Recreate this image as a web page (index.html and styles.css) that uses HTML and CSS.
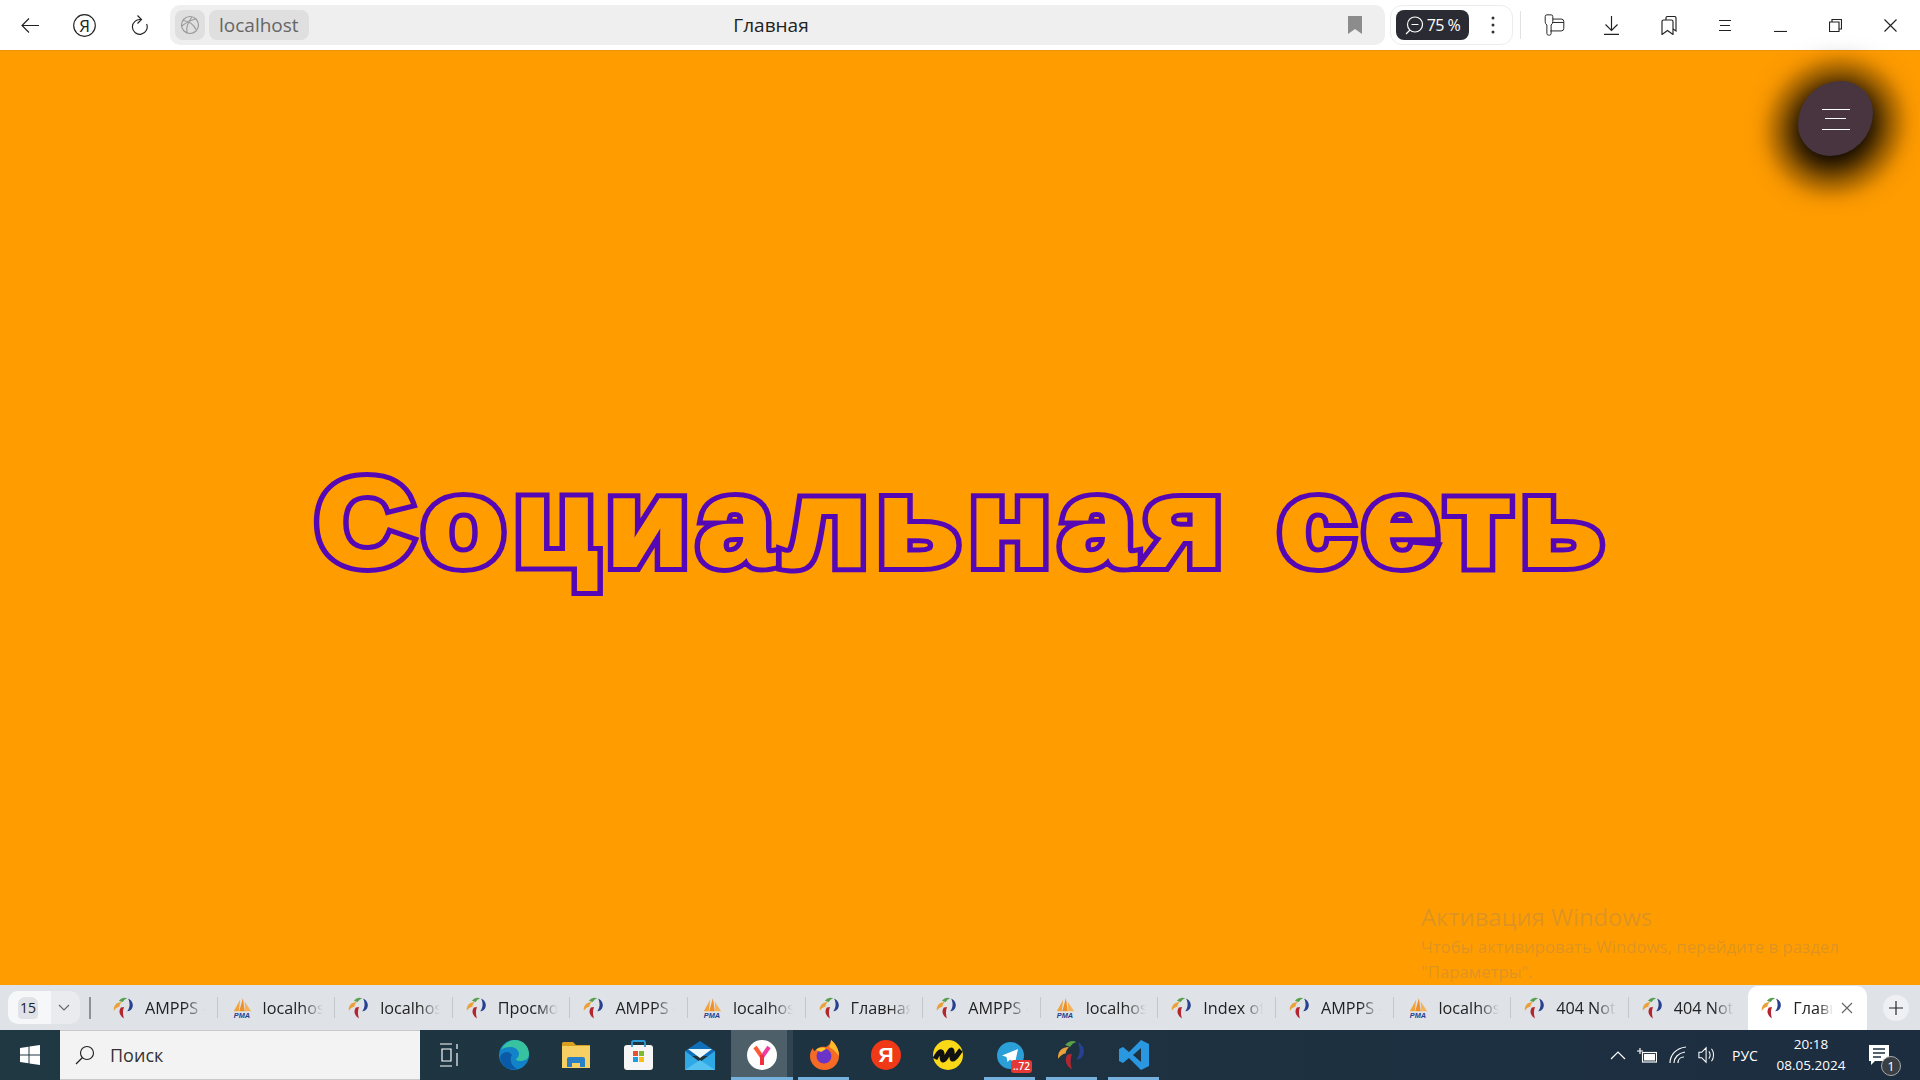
FILE: index.html
```html
<!DOCTYPE html>
<html lang="ru">
<head>
  <meta charset="UTF-8" />
  <meta name="viewport" content="width=device-width, initial-scale=1.0"/>
  <title>Главная</title>
  <link rel="stylesheet" href="styles.css">
</head>
<body>
  <!-- shared favicons -->
  <svg class="defs" width="0" height="0">
    <symbol id="ampps" viewBox="0 0 24 24">
      <path d="M8.500 11.500C6 15 6.500 20 12 23.500c-1.500-4-1.500-8.500 0-12.500z" fill="#b3262f"/>
      <path d="M1 15C0 10 3.500 5.500 9.500 5.500 8 7.500 7 9 7 10.500 4.500 11 2.500 12.500 1 15z" fill="#eaa13a"/>
      <path d="M6.500 4C9 .5 13 0 15.500 1.500 13.500 2 11.500 3.500 10.500 5.500 9 5 8 4.500 6.500 4z" fill="#58a04c"/>
      <path d="M16.500 1.500c5.500 2.500 7 9 2.500 13-1.500 1-2.500 1-3.500 1 3-3.500 3.500-9 1-14z" fill="#27408f"/>
    </symbol>
    <symbol id="pma" viewBox="0 0 24 24">
      <path d="M3 15.500 10 3l-1.500 12.500z" fill="#f2a23c"/>
      <path d="M9 15.500 13 1l2 14.500z" fill="#ee8f2a"/>
      <path d="M15.500 15.500 15 5l7 10.500z" fill="#f4b25a"/>
      <text x="12" y="23" text-anchor="middle" class="pma-text">PMA</text>
    </symbol>
  </svg>

  <header class="topbar">
    <div class="nav-btn">
      <svg width="18" height="15" viewBox="0 0 18 15" class="line"><path d="M18 7.500H1M8 .5l-7 7 7 7"/></svg>
    </div>
    <div class="nav-btn">
      <svg width="23" height="23" viewBox="0 0 23 23" class="line"><circle cx="11.500" cy="11.500" r="10.800"/><text x="11.500" y="17.500" text-anchor="middle" class="ya-text">Я</text></svg>
    </div>
    <div class="nav-btn">
      <svg width="17" height="21" viewBox="0 0 17 21" class="line"><path d="M10 4.600A7.400 7.400 0 1 0 15.600 9M6.500 .5l4 4-4 4"/></svg>
    </div>

    <div class="omnibox">
      <span class="site-icon">
        <svg width="20" height="20" viewBox="0 0 20 20" class="line globe"><circle cx="10" cy="10" r="8.500"/><path d="M3 5.500c5 .5 10 3 13 9M1.800 11c4-3 9-6 13.500-7M7 18c-1-5 1-11 5-16"/></svg>
      </span>
      <span class="host">localhost</span>
      <span class="page-title">Главная</span>
      <svg class="bookmark" width="14" height="18" viewBox="0 0 14 18"><path d="M0 0h14v18l-7-5-7 5z"/></svg>
    </div>

    <div class="zoom-group">
      <span class="zoom-pill">
        <svg width="18" height="19" viewBox="0 0 18 19" class="line light"><circle cx="10" cy="8.500" r="7.500"/><path d="M6.500 8.500h7M5 14l-4 4"/></svg>
        75 %
      </span>
      <span class="dots">
        <svg width="4" height="18" viewBox="0 0 4 18"><circle cx="2" cy="2" r="1.500"/><circle cx="2" cy="9" r="1.500"/><circle cx="2" cy="16" r="1.500"/></svg>
      </span>
    </div>
    <span class="bar-sep"></span>

    <div class="tools">
      <span class="tool">
        <svg width="21" height="22" viewBox="0 0 24 26" class="line"><path d="M5 25a2 2 0 0 1-2-2V13a5 5 0 0 1-2-4V3a2 2 0 0 1 2-2h5a2 2 0 0 1 2 2v6a5 5 0 0 1-2 4v10a2 2 0 0 1-2 2zM10 6h10a3 3 0 0 1 3 3v8a3 3 0 0 1-3 3H7M10 10h13"/></svg>
      </span>
      <span class="tool">
        <svg width="15" height="19" viewBox="0 0 15 19" class="line"><path d="M7.500 0v14M1.500 8.500l6 6 6-6M0 18.400h15"/></svg>
      </span>
      <span class="tool">
        <svg width="16" height="19" viewBox="0 0 16 19" class="line"><path d="M5 4V2a1.500 1.500 0 0 1 1.500-1.500h7A1.500 1.500 0 0 1 15 2v13l-3-2"/><path d="M1 5.500A1.500 1.500 0 0 1 2.500 4h8A1.500 1.500 0 0 1 12 5.500v13l-5.500-4-5.500 4z"/></svg>
      </span>
      <span class="tool">
        <svg width="12" height="11" viewBox="0 0 12 11" class="line"><path d="M0 .5h12M1 5.500h10M0 10.500h12"/></svg>
      </span>
      <span class="tool">
        <svg width="13" height="13" viewBox="0 0 13 13" class="line"><path d="M0 12.500h13"/></svg>
      </span>
      <span class="tool">
        <svg width="13" height="13" viewBox="0 0 13 13" class="line"><path d="M3 3V.5h9.500V10H10M.5 3H10v9.500H.5z"/></svg>
      </span>
      <span class="tool">
        <svg width="13" height="13" viewBox="0 0 13 13" class="line"><path d="M.5 .5l12 12M12.500 .5l-12 12"/></svg>
      </span>
    </div>
  </header>

  <main class="page">
    <h1 class="hero" data-text="Социальная сеть">Социальная сеть</h1>

    <button class="menu-btn" aria-label="Меню">
      <span class="menu-line"></span>
      <span class="menu-line short"></span>
      <span class="menu-line"></span>
    </button>

    <div class="watermark">
      <div class="wm-title">Активация Windows</div>
      <div class="wm-text">Чтобы активировать Windows, перейдите в раздел<br>"Параметры".</div>
    </div>
  </main>

  <nav class="tabbar">
    <div class="tab-count">
      <span class="count-num">15</span>
      <svg width="12" height="8" viewBox="0 0 12 8" class="line grey"><path d="M1 1l5 5 5-5"/></svg>
    </div>
    <span class="tab-divider"></span>
    <div class="tabs">
      <div class="tab"><svg class="fav"><use href="#ampps"/></svg><span class="tab-text">AMPPS - Ho</span></div>
      <div class="tab"><svg class="fav"><use href="#pma"/></svg><span class="tab-text">localhost</span></div>
      <div class="tab"><svg class="fav"><use href="#ampps"/></svg><span class="tab-text">localhost</span></div>
      <div class="tab"><svg class="fav"><use href="#ampps"/></svg><span class="tab-text">Просмотр</span></div>
      <div class="tab"><svg class="fav"><use href="#ampps"/></svg><span class="tab-text">AMPPS - Ho</span></div>
      <div class="tab"><svg class="fav"><use href="#pma"/></svg><span class="tab-text">localhost</span></div>
      <div class="tab"><svg class="fav"><use href="#ampps"/></svg><span class="tab-text">Главная</span></div>
      <div class="tab"><svg class="fav"><use href="#ampps"/></svg><span class="tab-text">AMPPS - Ho</span></div>
      <div class="tab"><svg class="fav"><use href="#pma"/></svg><span class="tab-text">localhost</span></div>
      <div class="tab"><svg class="fav"><use href="#ampps"/></svg><span class="tab-text">Index of /</span></div>
      <div class="tab"><svg class="fav"><use href="#ampps"/></svg><span class="tab-text">AMPPS - Ho</span></div>
      <div class="tab"><svg class="fav"><use href="#pma"/></svg><span class="tab-text">localhost</span></div>
      <div class="tab"><svg class="fav"><use href="#ampps"/></svg><span class="tab-text">404 Not F</span></div>
      <div class="tab"><svg class="fav"><use href="#ampps"/></svg><span class="tab-text">404 Not F</span></div>
      <div class="tab active"><svg class="fav"><use href="#ampps"/></svg><span class="tab-text short">Главная</span>
        <svg width="12" height="12" viewBox="0 0 12 12" class="line grey"><path d="M1 1l10 10M11 1 1 11"/></svg>
      </div>
    </div>
    <span class="new-tab">
      <svg width="14" height="14" viewBox="0 0 14 14" class="line"><path d="M7 0v14M0 7h14"/></svg>
    </span>
  </nav>

  <footer class="taskbar">
    <div class="start">
      <svg width="20" height="20" viewBox="0 0 20 20" fill="#fff"><path d="M0 3l8.500-1.200v7.700H0zM9.500 1.600 20 0v9.500H9.500zM0 10.500h8.500v7.700L0 17zM9.500 10.500H20V20L9.500 18.400z"/></svg>
    </div>
    <div class="search">
      <svg width="20" height="20" viewBox="0 0 20 20" class="line"><circle cx="12" cy="8" r="6.500"/><path d="M7.500 12.500 1 19"/></svg>
      <span>Поиск</span>
    </div>
    <div class="apps">
      <span class="app taskview">
        <svg width="20" height="26" viewBox="0 0 20 26" class="line light"><path d="M1 2h12M3 7h9v12H3zM1 24h12M18 2v5M18 11v13"/></svg>
      </span>
      <span class="app">
        <svg width="30" height="30" viewBox="0 0 30 30"><circle cx="15" cy="15" r="15" fill="#1283c9"/><path d="M2 10C5 3 11 0 16 0c9 0 14 7 14 14 0 5-4 7-9 7-3 0-4-1-4-2 2-1 3-3 3-6-1-4-5-6-8-6-4 0-8 1-10 3z" fill="#37c39f"/><path d="M13 15c-3 4-1 11 5 14C11 31 2 27 1 17c2-5 9-7 12-2z" fill="#0b5aa8"/></svg>
      </span>
      <span class="app">
        <svg width="28" height="26" viewBox="0 0 28 26"><path d="M0 1.500A1.500 1.500 0 0 1 1.500 0H11l3 3h14v6H0z" fill="#d99f1e"/><path d="M0 4h28v22H0z" fill="#f7d063"/><path d="M5 25v-8a2 2 0 0 1 2-2h14a2 2 0 0 1 2 2v8h-5v-4h-8v4z" fill="#2a80c4"/></svg>
      </span>
      <span class="app">
        <svg width="29" height="30" viewBox="0 0 29 30"><rect y="5" width="29" height="25" rx="3" fill="#f5f5f5"/><path d="M8 7V2.500A1.500 1.500 0 0 1 9.500 1h10A1.500 1.500 0 0 1 21 2.500V7" fill="none" stroke="#2a9bd8" stroke-width="1.800"/><rect x="9" y="11" width="5" height="5" fill="#e8502e"/><rect x="15" y="11" width="5" height="5" fill="#7fba2a"/><rect x="9" y="17" width="5" height="5" fill="#1f9be0"/><rect x="15" y="17" width="5" height="5" fill="#fbbc14"/></svg>
      </span>
      <span class="app">
        <svg width="30" height="29" viewBox="0 0 30 29"><path d="M0 10 15 0l15 10v5H0z" fill="#0f6fb8"/><path d="M0 10l15 11 15-11v19H0z" fill="#2fa8e6"/><path d="M3 8h24L15 17z" fill="#eaf7fd"/><path d="M0 29l15-10 15 10z" fill="#54c1f0"/></svg>
      </span>
      <span class="app current">
        <svg width="30" height="30" viewBox="0 0 30 30"><circle cx="15" cy="15" r="15" fill="#fff"/><path d="M15 17 8 7" stroke="#ff5a36" stroke-width="4"/><path d="M15 17l7-10" stroke="#f03ca0" stroke-width="4"/><path d="M15 15v10" stroke="#f0323c" stroke-width="4"/></svg>
      </span>
      <span class="app running">
        <svg width="29" height="30" viewBox="0 0 29 30"><path d="M21 0c5 4 8 10 8 16a14.500 14 0 0 1-29 0c0-3 1-6 3-8 0 2 1 3 2 3 2-4 8-5 11-4 3-2 5-4 5-7z" fill="#f56a24"/><path d="M21 0c5 4 8 10 8 16-3-4-6-7-10-9 1-2 2-4 2-7z" fill="#ffbb2b"/><circle cx="14" cy="16" r="7.500" fill="#6a34c8"/><path d="M6 10c3-3 8-3 10-1l-5 3z" fill="#ffc52b"/></svg>
      </span>
      <span class="app">
        <svg width="30" height="30" viewBox="0 0 30 30"><circle cx="15" cy="15" r="15" fill="#f03a17"/><text x="15" y="22" text-anchor="middle" class="ya-logo">Я</text></svg>
      </span>
      <span class="app">
        <svg width="30" height="30" viewBox="0 0 30 30"><circle cx="15" cy="15" r="15" fill="#fbd919"/><path d="M2 19c3-6 5-8 6.500-7s-.5 8 2 8 6-11 8-10-1 9 1.500 9 5-6 8-9" fill="none" stroke="#111" stroke-width="5" stroke-linejoin="round"/></svg>
      </span>
      <span class="app running tg">
        <svg width="27" height="27" viewBox="0 0 27 27"><circle cx="13.500" cy="13.500" r="13.500" fill="#2a9fd8"/><path d="M5 13.500 21 7l-3 14-5-3.500-2.500 2.500-1-5z" fill="#fff"/></svg>
        <span class="tg-badge">..72</span>
      </span>
      <span class="app running">
        <svg width="30" height="30" viewBox="0 0 24 24"><use href="#ampps"/></svg>
      </span>
      <span class="app running">
        <svg width="30" height="30" viewBox="0 0 30 30"><path fill-rule="evenodd" d="M22 0l8 4v22l-8 4L10 18l-6 5-4-2V9l4-2 6 5zM22 8l-8 7 8 7z" fill="#2a98e0"/></svg>
      </span>
    </div>

    <div class="tray">
      <span class="tray-item"><svg width="16" height="10" viewBox="0 0 16 10" class="line light"><path d="M1 9l7-7 7 7"/></svg></span>
      <span class="tray-item"><svg width="20" height="15" viewBox="0 0 20 15" class="line light"><path d="M3 0v3M0 3h6M3 3v3"/><rect x="5.500" y="4.500" width="14" height="9.500"/><rect class="solid" x="7" y="6" width="11" height="6.500"/></svg></span>
      <span class="tray-item"><svg width="18" height="18" viewBox="0 0 18 18" class="line light"><path d="M1 17C1 9 7 2 17 1M5 17c0-5 4-10 11-11M9 17c0-3 2-6 6-6"/></svg></span>
      <span class="tray-item"><svg width="20" height="18" viewBox="0 0 20 18" class="line light"><path d="M1 6h3l5-5v16l-5-5H1zM12 5c2 2 2 6 0 8M15 2c3 4 3 10 0 14"/></svg></span>
      <span class="tray-item lang">РУС</span>
      <span class="tray-item clock">20:18<br>08.05.2024</span>
      <span class="tray-item notify">
        <svg width="20" height="20" viewBox="0 0 20 20"><path d="M0 0h20v16H6l-4 4v-4H0z" fill="#fff"/><path d="M4 4h12M4 8h12M4 12h8" stroke="#1e2f40" stroke-width="1.500"/></svg>
        <span class="notify-badge">1</span>
      </span>
    </div>
  </footer>
</body>
</html>
```

FILE: styles.css
```css
* {
  box-sizing: border-box;
}
html, body {
  height: 100%;
}
body {
  margin: 0;
  display: flex;
  flex-direction: column;
  height: 1080px;
  overflow: hidden;
  font-family: "Open Sans", "Liberation Sans", sans-serif;
  background: #ff9c00;
}
.defs {
  position: absolute;
}
.pma-text {
  font: italic bold 8px "Liberation Sans", sans-serif;
  fill: #24408f;
}
.ya-text {
  font: 17px "Open Sans", sans-serif;
  fill: #222;
  stroke: none;
}
.ya-logo {
  font: bold 21px "Liberation Sans", sans-serif;
  fill: #fff;
}
.line {
  fill: none;
  stroke: #222;
  stroke-width: 1.15;
}
.line.light {
  stroke: #fff;
}
.line.grey {
  stroke: #666;
}
.line.globe {
  stroke: #999;
}
.solid {
  fill: #fff;
  stroke: none;
}

/* top browser bar */
.topbar {
  height: 50px;
  flex: none;
  display: flex;
  align-items: center;
  padding-left: 2px;
  background: #fff;
}
.nav-btn {
  width: 55px;
  display: flex;
  justify-content: center;
  align-items: center;
}
.omnibox {
  width: 1215px;
  height: 40px;
  margin-left: 3px;
  padding: 0 5px;
  display: flex;
  align-items: center;
  gap: 4px;
  position: relative;
  background: #efefef;
  border-radius: 10px;
}
.site-icon {
  width: 30px;
  height: 30px;
  display: flex;
  align-items: center;
  justify-content: center;
  background: #dfdfdf;
  border-radius: 8px;
}
.host {
  height: 30px;
  padding: 0 10px;
  display: flex;
  align-items: center;
  background: #dfdfdf;
  border-radius: 8px;
  font-size: 19px;
  color: #666;
}
.page-title {
  position: absolute;
  left: 0;
  right: 13px;
  text-align: center;
  font-size: 19px;
  color: #222;
}
.bookmark {
  margin-left: auto;
  margin-right: 18px;
  fill: #8c8c8c;
}
.zoom-group {
  width: 123px;
  height: 40px;
  margin-left: 5px;
  padding: 0 5px;
  display: flex;
  align-items: center;
  border: 1px solid #ececec;
  border-radius: 12px;
}
.zoom-pill {
  width: 73px;
  height: 30px;
  display: flex;
  align-items: center;
  justify-content: center;
  gap: 4px;
  background: #2b2b33;
  border-radius: 8px;
  color: #fff;
  font-size: 16px;
  letter-spacing: -0.5px;
  white-space: nowrap;
}
.dots {
  flex: 1;
  padding-left: 10px;
  display: flex;
  justify-content: center;
  fill: #333;
}
.bar-sep {
  width: 1px;
  height: 28px;
  margin-left: 7px;
  background: #e2e2e2;
}
.tools {
  margin-left: 5px;
  display: grid;
  grid-template-columns: 56px 58px 58px 54px 56px 54px 56px;
}
.tool {
  display: flex;
  justify-content: center;
  align-items: center;
}

/* page */
.page {
  flex: 1;
  position: relative;
  display: flex;
  align-items: center;
  justify-content: center;
  background: #ff9c00;
  border-top: 1px solid #ee9304;
}
.hero {
  position: relative;
  margin: 10px 0 0 9px;
  font-family: "Liberation Sans", Arial, sans-serif;
  font-size: 122px;
  font-weight: bold;
  letter-spacing: 8.7px;
  color: #5507b5;
  -webkit-text-stroke: 14px #5507b5;
  white-space: nowrap;
  transform: scaleX(1.1);
}
/* second layer on top, leaves only a ring of the wide stroke */
.hero::after {
  content: attr(data-text);
  position: absolute;
  left: 0;
  top: 0;
  color: #ff9c00;
  -webkit-text-stroke: 4px #ff9c00;
}
.menu-btn {
  position: absolute;
  top: 30px;
  left: 1798px;
  width: 75px;
  height: 75px;
  padding: 0;
  border: none;
  background: #483540;
  border-radius: 58% 42% 58% 42%;
  box-shadow: 0 8px 34px 14px #000, 0 8px 8px 31px rgba(205, 125, 0, 0.3);
}
.menu-line {
  position: absolute;
  left: 24px;
  top: 28px;
  width: 28px;
  height: 1px;
  background: #fff;
}
.menu-line.short {
  left: 27px;
  top: 37px;
  width: 21px;
}
.menu-line:last-child {
  top: 48px;
}
.watermark {
  position: absolute;
  left: 1421px;
  top: 851px;
  color: rgba(128, 128, 128, 0.28);
}
.wm-title {
  font-size: 23.8px;
  line-height: 30px;
}
.wm-text {
  margin-top: 2px;
  font-size: 16.8px;
  line-height: 25px;
}

/* tabs */
.tabbar {
  height: 45px;
  flex: none;
  display: flex;
  align-items: center;
  padding-left: 8px;
  background: #dfe3e8;
}
.tab-count {
  width: 72px;
  height: 33px;
  padding: 0 10px;
  display: flex;
  align-items: center;
  justify-content: space-between;
  background: linear-gradient(to right, #f6f7f9 60%, #e9ebef 60%);
  border-radius: 10px;
}
.count-num {
  width: 20px;
  height: 22px;
  display: flex;
  align-items: center;
  justify-content: center;
  background: #dfe3e8;
  border-radius: 7px 7px 4px 4px;
  font-size: 14px;
  color: #222;
}
.tab-divider {
  width: 2px;
  height: 22px;
  margin-left: 9px;
  background: #8d9299;
}
.tabs {
  display: flex;
  margin-left: 9px;
  height: 45px;
}
.tab {
  width: 117.6px;
  padding-left: 13px;
  display: flex;
  align-items: center;
  gap: 10px;
  font-size: 16.2px;
  color: #222;
  position: relative;
}
.tab:not(.active):not(:nth-last-child(2))::after {
  content: "";
  position: absolute;
  right: 0;
  top: 12px;
  height: 21px;
  width: 1px;
  background: #c4c8cd;
}
.tab.active {
  width: 119px;
  margin-left: 2px;
  margin-top: 1px;
  background: #fff;
  border-radius: 10px 10px 0 0;
}
.fav {
  width: 22px;
  height: 22px;
  flex: none;
}
.tab-text {
  width: 60px;
  overflow: hidden;
  white-space: nowrap;
  -webkit-mask-image: linear-gradient(to right, #000 65%, transparent 100%);
  mask-image: linear-gradient(to right, #000 65%, transparent 100%);
}
.tab-text.short {
  width: 40px;
  margin-right: -2px;
}
.new-tab {
  width: 26px;
  height: 26px;
  margin-left: 16px;
  display: flex;
  align-items: center;
  justify-content: center;
  background: #eef0f3;
  border-radius: 50%;
}

/* windows taskbar */
.taskbar {
  height: 50px;
  flex: none;
  display: flex;
  background: linear-gradient(to right, #1f3842, #1c2d40);
  color: #fff;
}
.start {
  width: 60px;
  display: flex;
  align-items: center;
  justify-content: center;
}
.search {
  width: 360px;
  padding-left: 15px;
  display: flex;
  align-items: center;
  gap: 15px;
  background: #f3f3f3;
  border: 1px solid #c9c9c9;
  border-width: 1px 0;
  color: #333;
  font-size: 18px;
}
.apps {
  display: flex;
  padding-left: 1px;
}
.app {
  width: 62px;
  display: flex;
  align-items: center;
  justify-content: center;
  position: relative;
}
.app.taskview {
  padding-right: 6px;
}
.app.running::after,
.app.current::after {
  content: "";
  position: absolute;
  left: 5px;
  right: 6px;
  bottom: 0;
  height: 3px;
  background: #76b0dc;
}
.app.current {
  background: linear-gradient(to right, #4d5f68 90%, #2f4450 90%);
}
.app.current::after {
  left: 0;
  right: 0;
}
.tg-badge {
  position: absolute;
  left: 32px;
  top: 30px;
  padding: 0 2px;
  background: #e53935;
  border-radius: 3px;
  font-size: 10px;
  line-height: 13px;
  font-weight: 600;
}
.tray {
  margin-left: auto;
  width: 320px;
  padding-right: 10px;
  display: grid;
  grid-template-columns: 36px 22px 40px 18px 58px 74px 62px;
  align-items: center;
}
.tray-item {
  display: flex;
  justify-content: center;
  align-items: center;
  text-align: center;
}
.lang {
  font-size: 14px;
}
.clock {
  display: block;
  font-size: 13.5px;
  line-height: 21px;
  white-space: nowrap;
}
.notify {
  position: relative;
}
.notify-badge {
  position: absolute;
  left: 33px;
  top: 11px;
  width: 20px;
  height: 20px;
  display: flex;
  align-items: center;
  justify-content: center;
  background: #3a3f44;
  border: 1px solid #aaa;
  border-radius: 50%;
  font-size: 13px;
}
```
